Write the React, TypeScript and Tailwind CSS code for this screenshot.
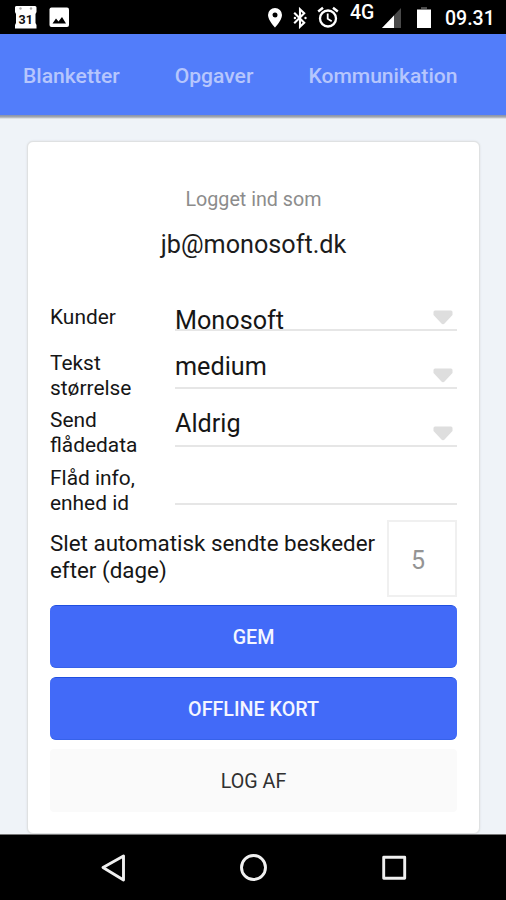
import React from "react";
import { clsx } from "clsx";

const tabs = ["Blanketter", "Opgaver", "Kommunikation"];

const settings = [
  { label: ["Kunder"], value: "Monosoft", select: true, row: "h-[46px]", field: "h-[26px]", arrow: "top-[5px]" },
  { label: ["Tekst", "størrelse"], value: "medium", select: true, row: "h-[57px]", field: "h-[38px]", arrow: "top-[17px]" },
  { label: ["Send", "flådedata"], value: "Aldrig", select: true, row: "h-[58px]", field: "h-[39px]", arrow: "top-[18px]" },
  { label: ["Flåd info,", "enhed id"], value: "", select: false, row: "h-[54px]", field: "h-[39px]", arrow: "" },
];

function StatusBar() {
  return (
    <header className="relative flex h-[34px] shrink-0 items-start bg-black text-white">
      <svg className="ml-[14px] mt-[5px]" width="24" height="24" viewBox="0 0 24 24">
        <path
          fill="#fff"
          d="M3 1h18a1.5 1.5 0 0 1 1.5 1.5V7L21.500 9v9l1 2v3.500H1V20l1-2V9L1 7V2.500A1.500 1.500 0 0 1 3 1z"
        />
        <circle cx="6.500" cy="3.500" r="1.200" fill="#aaa" />
        <circle cx="17" cy="3.500" r="1.200" fill="#aaa" />
        <text x="11.700" y="18.500" textAnchor="middle" fontFamily="Roboto" fontSize="12.500" fontWeight="700" fill="#111">
          31
        </text>
      </svg>
      <svg className="ml-[11px] mt-[7px]" width="21" height="21" viewBox="0 0 21 21">
        <rect x="0.500" y="0.500" width="19.500" height="19.500" rx="2" fill="#fff" />
        <path d="M3.500 16.500 7 11.500l2.500 3L13 10l4 6.500z" fill="#000" />
      </svg>
      <svg className="ml-[197px] mt-[8px]" width="16" height="20" viewBox="0 0 16 20">
        <path
          fill="#fff"
          fillRule="evenodd"
          d="M8 0a7 7 0 0 0-7 7c0 5.200 7 12.500 7 12.500S15 12.200 15 7a7 7 0 0 0-7-7zm0 4.500a2.500 2.500 0 1 1 0 5 2.500 2.500 0 0 1 0-5z"
        />
      </svg>
      <svg className="ml-[10px] mt-[7px]" width="16" height="22" viewBox="0 0 16 22">
        <path d="M1.200 5.700l10 10-4.200 4V2.300l4.200 4-10 10" fill="none" stroke="#fff" strokeWidth="2.100" />
        <circle cx="1.900" cy="11" r="1.200" fill="#fff" />
        <circle cx="12.500" cy="11" r="1.200" fill="#fff" />
      </svg>
      <svg className="ml-[8px] mt-[6px]" width="22" height="22" viewBox="0 0 22 22">
        <circle cx="11" cy="12.500" r="8" fill="none" stroke="#fff" strokeWidth="2.300" />
        <path d="M1.200 5.500 6 1.800M20.800 5.500 16 1.800" stroke="#fff" strokeWidth="2.500" />
        <path d="M10.700 7.500v5.300l4 2.400" fill="none" stroke="#fff" strokeWidth="1.800" />
      </svg>
      <span className="ml-[11px] mt-[2px] font-['Roboto',sans-serif] text-[19.500px] font-medium leading-[22px]">4G</span>
      <svg className="absolute left-[382px] top-[8px]" width="20" height="21" viewBox="0 0 20 21">
        <path d="M19 0v20H0z" fill="#4a4a4a" />
        <path d="M12 7.400V20H0z" fill="#fff" />
      </svg>
      <svg className="absolute left-[416px] top-[7px]" width="16" height="22" viewBox="0 0 16 22">
        <path d="M5 0h6v2H5z" fill="#4a4a4a" />
        <path d="M1 2.500h14V21H1z" fill="#fff" />
      </svg>
      <span className="absolute left-[445px] top-[7px] font-['Roboto',sans-serif] text-[19.500px] font-medium leading-[24px]">
        09.31
      </span>
    </header>
  );
}

function Arrow({ className }: { className: string }) {
  return (
    <svg className={clsx("absolute right-[4px]", className)} width="20" height="15" viewBox="0 0 20 15">
      <path
        d="M2 .5h16Q19.500 .5 19.500 2V5L12 13Q10 15.500 8 13L.5 5V2Q.5 .5 2 .5z"
        fill="#dedede"
      />
    </svg>
  );
}

export default function App() {
  return (
    <div className="flex h-[900px] w-[506px] flex-col overflow-hidden bg-[#eff3f8] font-['Roboto',sans-serif]">
      <StatusBar />

      <nav className="flex h-[81px] shrink-0 items-center gap-[55px] bg-[#527dfa] pl-[23px] pt-[3px] text-[21.100px] font-medium text-[#b6c6fd]">
        {tabs.map((tab) => (
          <a key={tab} className="whitespace-nowrap">
            {tab}
          </a>
        ))}
      </nav>
      <div className="h-[4px] shrink-0 bg-linear-to-b from-[#8590ac] via-[#a5a9af] to-[#eff3f8]" />

      <main className="flex-1 pl-[27px] pr-[26px] pt-[22px]">
        <section className="h-[693px] rounded-[6px] border border-[#dfe1e2] bg-white px-[22px] shadow-[0_0_2px_#d8dadc]">
          <p className="pt-[46px] text-center text-[19.700px] leading-[24px] text-[#8c8c8c]">Logget ind som</p>
          <p className="mt-[18px] text-center text-[25.200px] leading-[30px] text-[#1c1c1c]">jb@monosoft.dk</p>

          <div className="mt-[45px] text-[#161616]">
            {settings.map((item) => (
              <div key={item.label[0]} className={clsx("flex", item.row)}>
                <div className="w-[125px] text-[20.900px] leading-[24.500px]">
                  {item.label.map((line) => (
                    <div key={line}>{line}</div>
                  ))}
                </div>
                <div className={clsx("relative flex-1 border-b-2 border-[#e6e6e6]", item.field)}>
                  <div className="pt-px text-[25.200px] leading-[30px]">{item.value}</div>
                  {item.select && <Arrow className={item.arrow} />}
                </div>
              </div>
            ))}
          </div>

          <div className="flex h-[77px] justify-between">
            <p className="pt-[10px] text-[22.400px] leading-[27px] whitespace-nowrap text-[#161616]">
              Slet automatisk sendte beskeder
              <br />
              efter (dage)
            </p>
            <div className="h-[77px] w-[70px] border-2 border-[#f0f0f0] pl-[22px] pt-[24px] text-[25px] leading-[30px] text-[#949494]">
              5
            </div>
          </div>

          <div className="mt-[8px] flex flex-col gap-[9px] text-[19.700px]">
            <button className="h-[63px] rounded-[6px] border-y border-t-[#1f4fe0] border-b-[#3762ea] bg-[#426af8] pt-[3px] font-medium text-[#f4f6ff]">
              GEM
            </button>
            <button className="h-[63px] rounded-[6px] border-y border-t-[#1f4fe0] border-b-[#3762ea] bg-[#426af8] pt-[3px] font-medium text-[#f4f6ff]">
              OFFLINE KORT
            </button>
            <button className="h-[63px] rounded-[4px] bg-[#fafafa] pt-[3px] text-[#303030]">LOG AF</button>
          </div>
        </section>
      </main>

      <footer className="flex h-[67px] shrink-0 border-t border-[#777] bg-black">
        <svg width="506" height="66" viewBox="0 0 506 66" fill="none" stroke="#f0f0f0" strokeWidth="2.900" strokeLinejoin="round">
          <path d="M103 32.500 123.500 21v24z" />
          <circle cx="253.500" cy="32.500" r="12" />
          <rect x="383.700" y="22.200" width="21" height="21" />
        </svg>
      </footer>
    </div>
  );
}
